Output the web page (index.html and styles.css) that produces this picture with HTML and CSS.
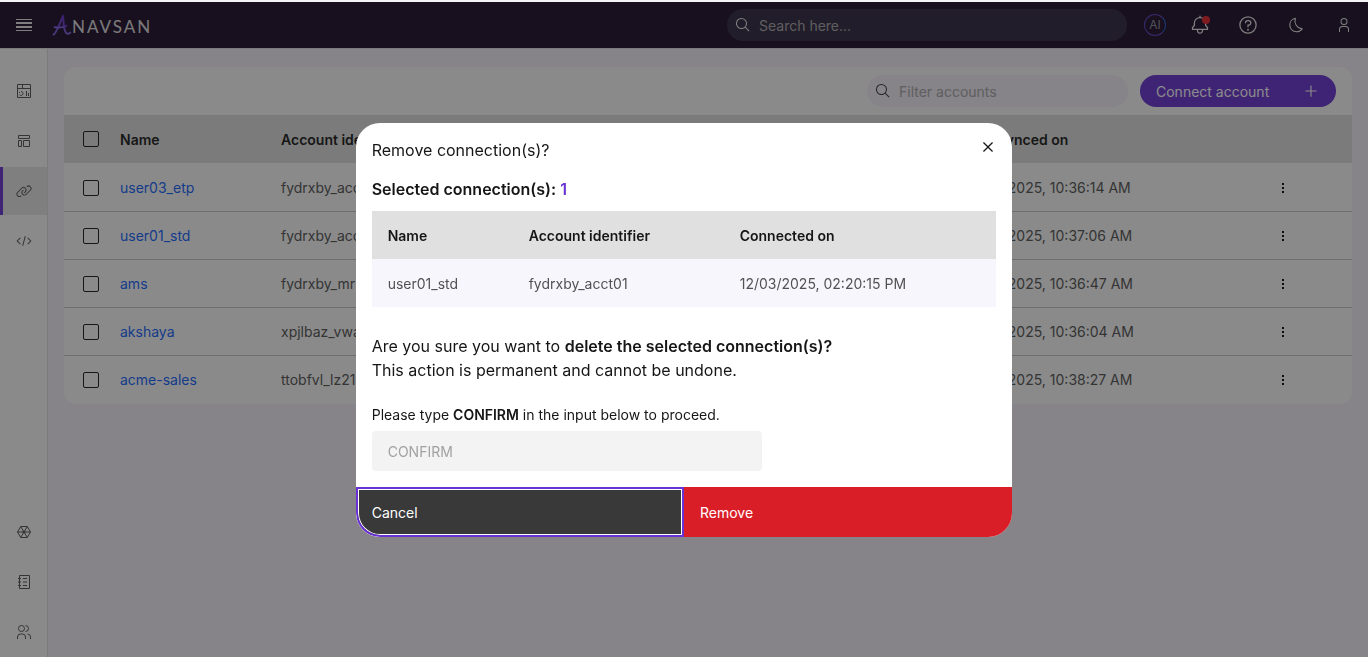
FILE: index.html
```
<!DOCTYPE html>
<html lang="en">
<head>
    <meta charset="UTF-8">
    <meta name="viewport" content="width=device-width, initial-scale=1.0">
    <title>Anavsan - Connections</title>
    <link rel="stylesheet" href="styles.css">
</head>
<body>
    <svg width="0" height="0" class="symbols">
        <symbol id="kebab" viewBox="0 0 16 16"><path d="M7 3h2v2H7zM7 7h2v2H7zM7 11h2v2H7z"/></symbol>
    </svg>

    <header class="header">
        <button class="icon-btn menu-btn" aria-label="Menu">
            <svg width="16" height="12" viewBox="0 0 16 12" fill="currentColor"><path d="M0 0h16v1H0zM0 3h16v2H0zM0 7h16v2H0zM0 11h16v1H0z"/></svg>
        </button>
        <a href="#" class="logo">
            <svg width="20" height="22" viewBox="0 0 20 22" fill="none" stroke="url(#logoFill)" stroke-linecap="round" stroke-linejoin="round">
                <defs>
                    <linearGradient id="logoFill" x1="0" y1="0" x2="0" y2="1">
                        <stop offset="0" stop-color="#6226c8"/>
                        <stop offset="1" stop-color="#7c60e0"/>
                    </linearGradient>
                </defs>
                <path stroke-width="2" d="M1.500 20.500C4 20 8 9 11 1.800c.6 6 .5 12 2.400 16 1.100 2.600 3.300 2.600 4.800.8"/>
                <path stroke-width="2" d="M2.500 13c4 1 8 .5 12-1.300"/>
            </svg>
            <span class="logo-text">NAVSAN</span>
        </a>
        <div class="search header-search">
            <svg width="16" height="16" viewBox="0 0 32 32" fill="currentColor"><path d="M29 27.586l-7.552-7.552a11.018 11.018 0 1 0-1.414 1.414L27.586 29ZM4 13a9 9 0 1 1 9 9A9.01 9.01 0 0 1 4 13Z"/></svg>
            <input type="text" placeholder="Search here..." aria-label="Search">
        </div>
        <nav class="header-actions">
            <button class="ai-btn">AI</button>
            <button class="icon-btn bell" aria-label="Notifications">
                <svg width="20" height="20" viewBox="0 0 32 32" fill="currentColor"><path d="M28.707 19.293 26 16.586V13a10.014 10.014 0 0 0-9-9.950V1h-2v2.050A10.014 10.014 0 0 0 6 13v3.586l-2.707 2.707A1 1 0 0 0 3 20v3a1 1 0 0 0 1 1h7v.777a5.152 5.152 0 0 0 4.500 5.199A5.006 5.006 0 0 0 21 25v-1h7a1 1 0 0 0 1-1v-3a1 1 0 0 0-.293-.707ZM19 25a3 3 0 0 1-6 0v-1h6Zm8-3H5v-1.586l2.707-2.707A1 1 0 0 0 8 17v-4a8 8 0 0 1 16 0v4a1 1 0 0 0 .293.707L27 20.414Z"/></svg>
                <span class="dot"></span>
            </button>
            <button class="icon-btn" aria-label="Help">
                <svg width="20" height="20" viewBox="0 0 32 32" fill="currentColor"><path d="M16 2a14 14 0 1 0 14 14A14 14 0 0 0 16 2Zm0 26a12 12 0 1 1 12-12 12 12 0 0 1-12 12Z"/><circle cx="16" cy="23.500" r="1.500"/><path d="M17 8h-1.500A4.490 4.490 0 0 0 11 12.500v.5h2v-.5a2.500 2.500 0 0 1 2.500-2.500H17a2.500 2.500 0 0 1 0 5h-2v4.500h2V17a4.500 4.500 0 0 0 0-9Z"/></svg>
            </button>
            <button class="icon-btn" aria-label="Dark mode">
                <svg width="18" height="18" viewBox="0 0 32 32" fill="currentColor"><path d="M13.503 5.414a15.076 15.076 0 0 0 11.593 18.194 11.113 11.113 0 0 1-7.975 3.390c-.139 0-.278.005-.418 0A11.094 11.094 0 0 1 13.503 5.414M14.980 3a1 1 0 0 0-.175.016A13.096 13.096 0 0 0 16.630 28.997c.164.006.328 0 .491 0a13.072 13.072 0 0 0 10.702-5.556 1.010 1.010 0 0 0-.783-1.564A13.080 13.080 0 0 1 15.889 4.380 1.015 1.015 0 0 0 14.980 3Z"/></svg>
            </button>
            <button class="icon-btn" aria-label="Profile">
                <svg width="16" height="16" viewBox="0 0 32 32" fill="currentColor"><path d="M16 4a5 5 0 1 1-5 5 5 5 0 0 1 5-5m0-2a7 7 0 1 0 7 7 7 7 0 0 0-7-7ZM26 30h-2v-5a5 5 0 0 0-5-5h-6a5 5 0 0 0-5 5v5H6v-5a7 7 0 0 1 7-7h6a7 7 0 0 1 7 7Z"/></svg>
            </button>
        </nav>
    </header>

    <div class="layout">
        <aside class="sidebar">
            <a href="#" class="side-link" aria-label="Dashboard">
                <svg width="16" height="16" viewBox="0 0 16 16" fill="none" stroke="currentColor"><path d="M1.500 1.500h13v13h-13zM1.500 5.500h13M6.500 1.500v4M10.500 8v5M12.500 10v3"/><path d="M5 8.500a2 2 0 1 1-1.500 3.300M3.500 9v1"/></svg>
            </a>
            <a href="#" class="side-link" aria-label="Templates">
                <svg width="16" height="16" viewBox="0 0 32 32" fill="none" stroke="currentColor" stroke-width="2"><path d="M5 5h22v6H5zM5 15h6v12H5zM15 15h12v12H15z"/></svg>
            </a>
            <a href="#" class="side-link active" aria-label="Connections">
                <svg width="16" height="16" viewBox="0 0 32 32" fill="currentColor"><path d="M29.250 6.760a6 6 0 0 0-8.500 0l1.420 1.420a4 4 0 1 1 5.670 5.670l-8 8a4 4 0 1 1-5.670-5.660l1.410-1.420-1.410-1.420-1.420 1.420a6 6 0 0 0 0 8.500A6 6 0 0 0 17 25a6 6 0 0 0 4.270-1.760l8-8a6 6 0 0 0-.02-8.480Z"/><path d="M4.190 24.820a4 4 0 0 1 0-5.670l8-8a4 4 0 0 1 5.670 0A3.940 3.940 0 0 1 19 14a4 4 0 0 1-1.170 2.850L15.710 19l1.420 1.420 2.120-2.120a6 6 0 0 0-8.510-8.510l-8 8a6 6 0 0 0 0 8.510A6 6 0 0 0 7 28a6.070 6.070 0 0 0 4.280-1.760L9.860 24.820a4 4 0 0 1-5.670 0Z"/></svg>
            </a>
            <a href="#" class="side-link" aria-label="Queries">
                <svg width="16" height="16" viewBox="0 0 32 32" fill="currentColor"><path d="M31 16l-7 7-1.410-1.410L28.170 16l-5.580-5.590L24 9l7 7zM1 16l7-7 1.410 1.410L3.830 16l5.580 5.590L8 23l-7-7zM12.420 25.484L17.640 6l1.930.517L14.350 26z"/></svg>
            </a>
            <span class="side-space"></span>
            <a href="#" class="side-link" aria-label="Integrations">
                <svg width="16" height="16" viewBox="0 0 16 16" fill="none" stroke="currentColor"><path d="M4.700 2.500h6.600L14.500 8l-3.200 5.500H4.700L1.500 8zM1.500 8h13M4.700 2.500l6.600 11M11.300 2.500l-6.600 11"/><circle cx="8" cy="8" r="1" fill="currentColor"/></svg>
            </a>
            <a href="#" class="side-link" aria-label="Logs">
                <svg width="16" height="16" viewBox="0 0 16 16" fill="none" stroke="currentColor"><path d="M3.500 1.500h10v13h-10zM2 4.500h3M2 8h3M2 11.500h3M7 4.500h4M7 8h4M7 11.500h4"/></svg>
            </a>
            <a href="#" class="side-link" aria-label="Users">
                <svg width="16" height="16" viewBox="0 0 16 16" fill="none" stroke="currentColor"><circle cx="5.500" cy="4.500" r="3"/><path d="M1.500 15v-2a3 3 0 0 1 3-3h2a3 3 0 0 1 3 3v2M9.500 1.500a3 3 0 0 1 0 6M11.500 10a3 3 0 0 1 3 3v2"/></svg>
            </a>
        </aside>

        <main class="content">
            <div class="card">
                <div class="toolbar">
                    <div class="search filter">
                        <svg width="16" height="16" viewBox="0 0 32 32" fill="currentColor"><path d="M29 27.586l-7.552-7.552a11.018 11.018 0 1 0-1.414 1.414L27.586 29ZM4 13a9 9 0 1 1 9 9A9.01 9.01 0 0 1 4 13Z"/></svg>
                        <input type="text" placeholder="Filter accounts" aria-label="Filter accounts">
                    </div>
                    <button class="connect-btn">
                        <span>Connect account</span>
                        <svg width="18" height="18" viewBox="0 0 32 32" fill="currentColor"><path d="M17 15V6h-2v9H6v2h9v9h2v-9h9v-2z"/></svg>
                    </button>
                </div>
                <table class="accounts">
                    <colgroup>
                        <col class="col-check"><col class="col-name"><col class="col-id"><col class="col-date"><col class="col-menu">
                    </colgroup>
                    <thead>
                        <tr>
                            <th><input type="checkbox" aria-label="Select all"></th>
                            <th>Name</th>
                            <th>Account identifier</th>
                            <th>Last synced on</th>
                            <th></th>
                        </tr>
                    </thead>
                    <tbody>
                        <tr>
                            <td><input type="checkbox" aria-label="Select user03_etp"></td>
                            <td><a href="#">user03_etp</a></td>
                            <td>fydrxby_acct03</td>
                            <td>12/03/2025, 10:36:14 AM</td>
                            <td><button class="row-menu" aria-label="Options"><svg width="16" height="16"><use href="#kebab"/></svg></button></td>
                        </tr>
                        <tr>
                            <td><input type="checkbox" aria-label="Select user01_std"></td>
                            <td><a href="#">user01_std</a></td>
                            <td>fydrxby_acct01</td>
                            <td>12/03/2025, 10:37:06 AM</td>
                            <td><button class="row-menu" aria-label="Options"><svg width="16" height="16"><use href="#kebab"/></svg></button></td>
                        </tr>
                        <tr>
                            <td><input type="checkbox" aria-label="Select ams"></td>
                            <td><a href="#">ams</a></td>
                            <td>fydrxby_mr</td>
                            <td>12/03/2025, 10:36:47 AM</td>
                            <td><button class="row-menu" aria-label="Options"><svg width="16" height="16"><use href="#kebab"/></svg></button></td>
                        </tr>
                        <tr>
                            <td><input type="checkbox" aria-label="Select akshaya"></td>
                            <td><a href="#">akshaya</a></td>
                            <td>xpjlbaz_vwa</td>
                            <td>12/03/2025, 10:36:04 AM</td>
                            <td><button class="row-menu" aria-label="Options"><svg width="16" height="16"><use href="#kebab"/></svg></button></td>
                        </tr>
                        <tr>
                            <td><input type="checkbox" aria-label="Select acme-sales"></td>
                            <td><a href="#">acme-sales</a></td>
                            <td>ttobfvl_lz21</td>
                            <td>12/03/2025, 10:38:27 AM</td>
                            <td><button class="row-menu" aria-label="Options"><svg width="16" height="16"><use href="#kebab"/></svg></button></td>
                        </tr>
                    </tbody>
                </table>
            </div>
        </main>
    </div>

    <!-- Remove connection dialog -->
    <div class="overlay">
        <div class="modal" role="dialog" aria-labelledby="modalTitle">
            <div class="modal-body">
                <div class="modal-head">
                    <h2 id="modalTitle">Remove connection(s)?</h2>
                    <button class="close-btn" aria-label="Close">
                        <svg width="20" height="20" viewBox="0 0 32 32" fill="currentColor"><path d="M17.414 16 24 9.414 22.586 8 16 14.586 9.414 8 8 9.414 14.586 16 8 22.586 9.414 24 16 17.414 22.586 24 24 22.586z"/></svg>
                    </button>
                </div>
                <h3>Selected connection(s): <span class="count">1</span></h3>
                <table class="selected">
                    <colgroup>
                        <col class="sel-name"><col class="sel-id"><col>
                    </colgroup>
                    <thead>
                        <tr><th>Name</th><th>Account identifier</th><th>Connected on</th></tr>
                    </thead>
                    <tbody>
                        <tr><td>user01_std</td><td>fydrxby_acct01</td><td>12/03/2025, 02:20:15 PM</td></tr>
                    </tbody>
                </table>
                <p class="warning">Are you sure you want to <strong>delete the selected connection(s)?</strong><br>This action is permanent and cannot be undone.</p>
                <label for="confirmInput">Please type <strong>CONFIRM</strong> in the input below to proceed.</label>
                <input type="text" id="confirmInput" class="confirm-input" placeholder="CONFIRM">
            </div>
            <div class="modal-footer">
                <button class="cancel-btn">Cancel</button>
                <button class="remove-btn">Remove</button>
            </div>
        </div>
    </div>
</body>
</html>
```
FILE: styles.css
```
* {
    box-sizing: border-box;
}

body {
    margin: 0;
    min-height: 100vh;
    display: flex;
    flex-direction: column;
    border-top: 2px solid #f4f4f6;
    background-color: #f6f0fc;
    color: #161616;
    font-family: Inter, "Liberation Sans", sans-serif;
    font-size: 14px;
    line-height: 18px;
}

button,
input {
    font: inherit;
    border: none;
    outline: none;
}

button {
    padding: 0;
    background: none;
    color: inherit;
    cursor: pointer;
}

svg {
    display: block;
    flex-shrink: 0;
}

/* header */
.header {
    display: flex;
    align-items: center;
    height: 47px;
    background-color: #1a0a28;
    border-bottom: 1px solid #e0e0e0;
    color: #e8e8e8;
}

.icon-btn {
    position: relative;
    display: flex;
    align-items: center;
    justify-content: center;
    width: 48px;
    height: 46px;
}

.logo {
    display: flex;
    align-items: center;
    margin-left: 4px;
    color: #e0e0e0;
    text-decoration: none;
}

.logo-text {
    padding-top: 4px;
    font-family: Lato, sans-serif;
    font-size: 17px;
    letter-spacing: 2px;
}

.search {
    display: flex;
    align-items: center;
    gap: 6px;
    padding: 0 8px;
    height: 32px;
    border-radius: 16px;
}

.search input {
    flex: 1;
    min-width: 0;
    padding: 2px 2px 0;
    background: none;
    color: inherit;
}

.search input {
    padding-left: 2px;
}

.search input::placeholder {
    color: #a8a8a8;
}

.header-search {
    width: 400px;
    margin-left: auto;
    background-color: #2e2440;
}

.header-actions {
    display: flex;
    align-items: center;
    margin-left: 17px;
}

.ai-btn {
    width: 22px;
    height: 22px;
    margin-right: 10px;
    border: 1px solid #5a3fc0;
    border-right-color: #2458d0;
    border-radius: 50%;
    color: #8d8d9d;
    font-size: 12px;
    line-height: 20px;
}

.dot {
    position: absolute;
    top: 14px;
    right: 14px;
    width: 8px;
    height: 8px;
    border-radius: 50%;
    background-color: #e8202a;
}

/* sidebar */
.layout {
    flex: 1;
    display: flex;
}

.sidebar {
    display: flex;
    flex-direction: column;
    gap: 2px;
    width: 48px;
    padding: 18px 0 1px;
    background-color: #fff;
    border-right: 1px solid #e0e0e0;
}

.side-link {
    display: flex;
    align-items: center;
    justify-content: center;
    height: 48px;
    border-left: 3px solid transparent;
    padding-right: 2px;
    color: #525252;
}

.side-link.active {
    background-color: #e8e8e8;
    border-left-color: #6932d4;
}

.side-space {
    flex: 1;
}

/* accounts */
.content {
    flex: 1;
    padding: 18px 16px;
}

.card {
    overflow: hidden;
    padding-bottom: 1px;
    border-radius: 12px;
    background-color: #fff;
}

.toolbar {
    display: flex;
    align-items: center;
    justify-content: flex-end;
    gap: 12px;
    height: 48px;
    padding: 0 16px;
}

.filter {
    width: 261px;
    background-color: #f6f0fc;
    color: #393939;
}

.connect-btn {
    display: flex;
    align-items: center;
    justify-content: space-between;
    width: 196px;
    height: 32px;
    padding: 0 16px;
    border-radius: 16px;
    background-color: #6932d4;
    color: #fff;
}

.connect-btn span {
    padding-top: 2px;
}

table {
    width: 100%;
    border-collapse: collapse;
    table-layout: fixed;
}

th,
td {
    height: 48px;
    padding: 2px 16px 0;
    text-align: left;
    white-space: nowrap;
}

th {
    background-color: #e0e0e0;
    font-weight: 600;
}

td {
    color: #525252;
}

.accounts tbody tr + tr td {
    border-top: 1px solid #c6c6c6;
}

.accounts td a {
    color: #0f62fe;
    text-decoration: none;
}

.accounts td:first-child {
    padding: 2px 0 0 19px;
}

.accounts th:first-child {
    padding: 0 0 0 19px;
}

.col-check { width: 40px; }
.col-name { width: 161px; }
.col-date { width: 301px; }
.col-menu { width: 101px; }

input[type="checkbox"] {
    appearance: none;
    display: block;
    width: 16px;
    height: 16px;
    margin: 0;
    border: 1px solid #161616;
    border-radius: 2px;
}

.row-menu {
    display: flex;
    align-items: center;
    justify-content: center;
    width: 32px;
    height: 32px;
}

/* dialog */
.overlay {
    position: fixed;
    inset: 2px 0 0;
    display: flex;
    align-items: center;
    justify-content: center;
    background-color: rgba(22, 22, 22, 0.5);
}

.modal {
    width: 48%;
    overflow: hidden;
    border-radius: 24px;
    background-color: #fff;
}

.modal-body {
    padding: 15px 16px 16px;
}

.modal-head {
    display: flex;
    justify-content: space-between;
    height: 39px;
}

h2,
h3,
.warning {
    margin: 0;
    font-size: 16px;
    font-weight: 400;
    line-height: 24px;
}

h3 {
    margin-bottom: 10px;
    font-weight: 600;
}

strong {
    font-weight: 600;
}

.count {
    color: #6932d4;
}

.close-btn {
    width: 20px;
    height: 20px;
    margin: -1px -2px 0 0;
}

.selected td {
    background-color: #f7f6fd;
}

.sel-name { width: 141px; }
.sel-id { width: 211px; }

.warning {
    margin: 27px 0 24px;
}

label {
    display: block;
}

.confirm-input {
    display: block;
    width: 390px;
    height: 40px;
    margin-top: 7px;
    padding: 2px 16px 0;
    border-radius: 4px;
    background-color: #f3f3f3;
}

.confirm-input::placeholder {
    color: #a2a2a2;
}

.modal-footer {
    display: flex;
    height: 50px;
}

.modal-footer button {
    flex: 1;
    padding: 2px 16px 0;
    color: #fff;
    text-align: left;
}

.modal-footer .cancel-btn {
    border: 2px solid #6932d4;
    border-radius: 0 0 0 24px;
    padding: 2px 14px 0;
    background-color: #393939;
    box-shadow: inset 0 0 0 1px #fff;
}

.modal-footer .remove-btn {
    background-color: #da1e28;
}
```
